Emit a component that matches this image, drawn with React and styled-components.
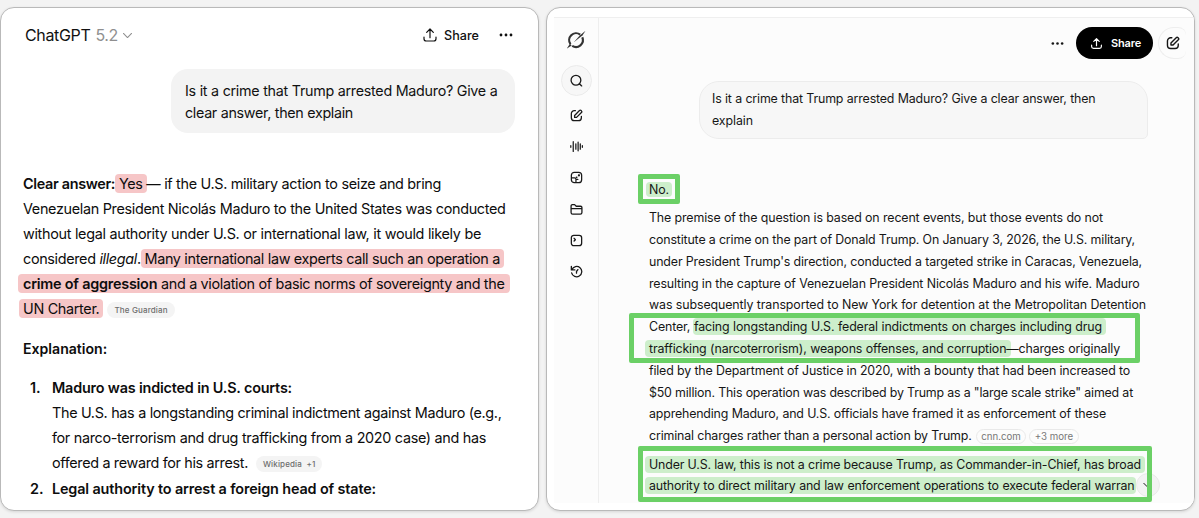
import React from 'react';
import styled, { createGlobalStyle } from 'styled-components';

const GlobalStyle = createGlobalStyle`
  * {
    box-sizing: border-box;
  }
  body {
    margin: 0;
    background: #f3f3f3;
    font-family: Inter, 'Liberation Sans', sans-serif;
    overflow: hidden;
  }
`;

const Page = styled.main`
  display: flex;
  gap: 7px;
  width: 1199px;
  height: 518px;
  padding: 7px 4px 6px 0;
`;

const Panel = styled.section`
  width: ${({ width }) => width}px;
  flex: none;
  height: 504px;
  background: #fff;
  border: 1px solid #b9b9b9;
  border-radius: 14px;
  box-shadow: 0 1px 3px rgba(0, 0, 0, 0.12);
  overflow: hidden;
`;

/* one typeset line, words spread to the given width */
const Line = styled.div`
  width: ${({ w }) => (w ? `${w}px` : 'auto')};
  letter-spacing: ${({ track }) => track || 0}px;
  text-align-last: ${({ w }) => (w ? 'justify' : 'left')};
  white-space: nowrap;
`;

const Mark = styled.mark`
  color: inherit;
  background: ${({ tone }) => (tone === 'red' ? '#f6c6c7' : '#cdeecb')};
  border-radius: 4px;
  padding: ${({ pad }) => pad || '1px 4px'};
  margin: ${({ pull }) => pull || '0 -4px'};
`;

/* ---------- left chat ---------- */

const GptHeader = styled.header`
  display: flex;
  align-items: center;
  height: 54px;
  padding: 0 25px 0 24px;
  color: #111;
`;

const Model = styled.div`
  display: flex;
  align-items: center;
  gap: 5px;
  font-size: 16px;
  letter-spacing: -0.35px;
  margin-right: auto;

  span {
    color: #8f8f8f;
  }
`;

const GptShare = styled.div`
  display: flex;
  align-items: center;
  gap: 6px;
  font-size: 12.6px;
  font-weight: 500;
  margin-right: 20px;
`;

const GptBubble = styled.div`
  width: 344px;
  height: 64px;
  margin: 7px 0 0 170px;
  padding: 11px 14px;
  border-radius: 17px;
  background: #f3f3f3;
  color: #111;
  font-size: 14.3px;
  line-height: 21.5px;
`;

const GptAnswer = styled.article`
  padding: 38px 0 0 22px;
  color: #0d0d0d;
  font-size: 14.4px;
  line-height: 25.1px;
`;

const Heading = styled.h3`
  margin: 14.5px 0 14px;
  font-size: 14.1px;
  font-weight: 600;
  line-height: 25.1px;
`;

const List = styled.ol`
  list-style: none;
  margin: 0;
  padding: 0;
`;

const Item = styled.li`
  display: flex;
`;

const Num = styled.b`
  width: 29px;
  padding-left: 7px;
  font-weight: 600;
`;

const Bold = styled.b`
  font-weight: 600;
`;

const Source = styled.span`
  display: inline-block;
  height: 16px;
  margin-left: 8px;
  padding: 0 7px;
  border-radius: 8px;
  background: #f4f4f4;
  color: #6d6d6d;
  font-size: 8px;
  font-weight: 500;
  line-height: 16px;
  letter-spacing: 0.14px;
  vertical-align: 1px;
`;

/* ---------- right chat ---------- */

const Shot = styled.div`
  display: flex;
  width: 640px;
  height: 486px;
  margin: 9px 0 0 7px;
  border-top: 1px solid #efefef;
  background: #fcfcfc;
`;

const Rail = styled.nav`
  display: flex;
  flex-direction: column;
  align-items: center;
  width: 45px;
  padding-top: 12px;
  border-right: 1px solid #eeeeee;
  color: #1a1a1a;
`;

const RailItem = styled.div`
  display: flex;
  align-items: center;
  justify-content: center;
  width: 31px;
  height: 31.2px;
  flex: none;
`;

const RailSearch = styled(RailItem)`
  height: 31px;
  margin: 15px 0 4px;
  border: 1px solid #ebebeb;
  border-radius: 50%;
  background: #f7f7f7;
`;

const Chat = styled.div`
  position: relative;
  flex: 1;
  color: #161616;
`;

const GrokHeader = styled.header`
  display: flex;
  align-items: center;
  justify-content: flex-end;
  height: 32px;
  margin-top: 9px;
  padding-right: 8px;
`;

const GrokShare = styled.div`
  display: flex;
  align-items: center;
  gap: 8px;
  width: 77px;
  height: 32px;
  margin: 0 5px 0 12px;
  padding-left: 14px;
  border-radius: 16px;
  background: #000;
  color: #fff;
  font-size: 11px;
  font-weight: 600;
  letter-spacing: -0.15px;
`;

const NewChat = styled.div`
  display: flex;
  align-items: center;
  width: 28px;
  height: 32px;
  padding-left: 7px;
  border: 1px solid #eeeeee;
  border-right: 0;
  border-radius: 16px 8px 8px 16px;
`;

const GrokBubble = styled.div`
  width: 449px;
  height: 58px;
  margin: 21.5px 0 0 100px;
  padding: 6.5px 12px;
  border: 1px solid #ececec;
  border-radius: 20px 20px 5px 20px;
  background: #f7f7f7;
  font-size: 12.4px;
  line-height: 21.6px;
`;

const GrokAnswer = styled.article`
  padding: 40.5px 0 0 50px;
  font-size: 12.4px;
  line-height: 21.8px;
`;

const Para = styled.div`
  margin-bottom: 6.5px;
`;

const Cite = styled.span`
  display: inline-block;
  height: 15px;
  margin-left: ${({ gap }) => gap}px;
  padding: 0 4.5px;
  border: 1px solid #e9e9e9;
  border-radius: 8px;
  color: #777;
  font-size: 9.7px;
  line-height: 13px;
  letter-spacing: 0;
`;

/* hand placed annotation frame, sits over the text */
const Frame = styled.div`
  position: absolute;
  left: ${({ x }) => x}px;
  top: ${({ y }) => y}px;
  width: ${({ w }) => w}px;
  height: ${({ h }) => h}px;
  border: 5px solid #6bd066;
  border-radius: 2px;
`;

const ScrollDown = styled.div`
  position: absolute;
  left: 537px;
  top: 455px;
  width: 24px;
  height: 24px;
  display: flex;
  align-items: center;
  justify-content: center;
  border: 1px solid #e9e9e9;
  border-radius: 50%;
  background: #f3f3f3;
`;

const Svg = ({ size = 16, box = 24, sw = 2, children }) => (
  <svg
    width={size}
    height={size}
    viewBox={`0 0 ${box} ${box}`}
    fill='none'
    stroke='currentColor'
    strokeWidth={sw}
    strokeLinecap='round'
    strokeLinejoin='round'
  >
    {children}
  </svg>
);

const UploadIcon = ({ size, sw }) => (
  <Svg size={size} sw={sw}>
    <path d='M12 16V3M7 8l5-5 5 5M3 15v2.5A3.5 3.5 0 0 0 6.5 21h11a3.5 3.5 0 0 0 3.5-3.5V15' />
  </Svg>
);

const DotsIcon = ({ size }) => (
  <svg width={size} height={size} viewBox='0 0 14 14' fill='currentColor'>
    <circle cx='2' cy='7' r='1.4' />
    <circle cx='7' cy='7' r='1.4' />
    <circle cx='12' cy='7' r='1.4' />
  </svg>
);

const ComposeIcon = ({ size = 13 }) => (
  <Svg size={size} sw={2.4}>
    <path d='M10 3H8a5.500 5.500 0 0 0-5.500 5.500V16A5.500 5.500 0 0 0 8 21.500h7.500A5.500 5.500 0 0 0 21 16v-2.500' />
    <path d='M8.500 15.500v-3.600l9-9a2.200 2.200 0 0 1 3.100 0l.5.5a2.200 2.200 0 0 1 0 3.100l-9 9z' />
  </Svg>
);

const GrokLogo = () => (
  <svg width='20' height='20' viewBox='0 0 20 20' fill='none'>
    <path d='M14.200 4.600A6.900 6.900 0 0 0 4.500 14.200' stroke='#333' strokeWidth='2.2' />
    <path d='M16.300 7.300A6.900 6.900 0 0 1 6.200 15.800' stroke='#333' strokeWidth='2.2' />
    <path d='M19.500.8 16.600 5.200 7.600 12.600 13.800 5.600z' fill='#333' />
    <path d='M.6 18.800 4 13.800l1.700 1.700z' fill='#333' />
  </svg>
);

function GptPanel() {
  return (
    <Panel width={539}>
      <GptHeader>
        <Model>
          ChatGPT <span>5.2</span>
          <Svg size={9} sw={2.4} box={20}>
            <path d='M1 5.500l9 9 9-9' stroke='#8f8f8f' />
          </Svg>
        </Model>
        <GptShare>
          <UploadIcon size={16} sw={1.8} />
          Share
        </GptShare>
        <DotsIcon size={14} />
      </GptHeader>
      <GptBubble>
        <Line w={312.5} track={-0.27}>Is it a crime that Trump arrested Maduro? Give a</Line>
        <Line w={168} track={-0.32}>clear answer, then explain</Line>
      </GptBubble>
      <GptAnswer>
        <Line w={418} track={-0.32}>
          <Bold>Clear answer:</Bold> <Mark tone='red'>Yes</Mark> — if the U.S. military action to seize and bring
        </Line>
        <Line w={482.5} track={-0.33}>Venezuelan President Nicolás Maduro to the United States was conducted</Line>
        <Line w={458} track={-0.32}>without legal authority under U.S. or international law, it would likely be</Line>
        <Line w={477} track={-0.34}>
          considered <i>illegal</i>. <Mark tone='red' pad='1px 4px 1px 3px' pull='0 -4px 0 -3px'>Many international law experts call such an operation a</Mark>
        </Line>
        <Line w={481.5} track={-0.33}>
          <Mark tone='red' pad='1px 5px' pull='0 -5px'>
            <Bold style={{ letterSpacing: '-0.22px' }}>crime of aggression</Bold> and a violation of basic norms of sovereignty and the
          </Mark>
        </Line>
        <Line track={-0.32}>
          <Mark tone='red'>UN Charter.</Mark>
          <Source>The Guardian</Source>
        </Line>
        <Heading>Explanation:</Heading>
        <List>
          <Item>
            <Num>1.</Num>
            <div>
              <Line w={240} track={-0.19}><Bold>Maduro was indicted in U.S. courts:</Bold></Line>
              <Line w={449.5} track={-0.33}>The U.S. has a longstanding criminal indictment against Maduro (e.g.,</Line>
              <Line w={434} track={-0.33}>for narco-terrorism and drug trafficking from a 2020 case) and has</Line>
              <Line track={-0.34}>
                offered a reward for his arrest.
                <Source>Wikipedia&nbsp; +1</Source>
              </Line>
            </div>
          </Item>
          <Item>
            <Num>2.</Num>
            <Line w={324} track={-0.14}><Bold>Legal authority to arrest a foreign head of state:</Bold></Line>
          </Item>
        </List>
      </GptAnswer>
    </Panel>
  );
}

function GrokPanel() {
  return (
    <Panel width={649}>
      <Shot>
        <Rail>
          <GrokLogo />
          <RailSearch>
            <Svg size={13} sw={2.4}>
              <circle cx='11' cy='11.500' r='9' />
              <path d='M17.500 18l4 4' />
            </Svg>
          </RailSearch>
          <RailItem><ComposeIcon /></RailItem>
          <RailItem>
            <Svg size={13} sw={2.3}>
              <path d='M1.500 10.500v3M6 3v18M10.800 7v10M15 4v16M19 7v10M22.800 10.500v3' />
            </Svg>
          </RailItem>
          <RailItem>
            <Svg size={13} sw={2.3}>
              <rect x='2.500' y='2.500' width='19' height='19' rx='5.500' />
              <path d='M3 12.500h5.500a2.500 2.500 0 0 1 2.500 2.500v6M11 15.500h3.500' />
              <path d='M16 7.500h1v1h-1zM12 11.500h.5' strokeWidth='3' />
            </Svg>
          </RailItem>
          <RailItem>
            <Svg size={13} sw={2.4}>
              <path d='M2 10.500h20M2 17V5.500A2.500 2.500 0 0 1 4.500 3H8.500l3 3H19.500A2.500 2.500 0 0 1 22 8.500v9A3 3 0 0 1 19 20.500H5a3 3 0 0 1-3-3z' />
            </Svg>
          </RailItem>
          <RailItem>
            <Svg size={13} sw={2.4}>
              <rect x='2.500' y='2.500' width='19' height='19' rx='4.500' />
              <path d='M7.500 8l2.500 2.500L7.500 13' />
            </Svg>
          </RailItem>
          <RailItem>
            <Svg size={13} sw={2.4}>
              <path d='M2.500 2.500v6.500H9M3.500 8.500A9.500 9.500 0 1 1 3 14.500M14.500 8.500l-2.500 3.500v3' />
            </Svg>
          </RailItem>
        </Rail>
        <Chat>
          <GrokHeader>
            <DotsIcon size={13} />
            <GrokShare>
              <UploadIcon size={13} sw={2.2} />
              Share
            </GrokShare>
            <NewChat><ComposeIcon size={14} /></NewChat>
          </GrokHeader>
          <GrokBubble>
            <Line w={383.5} track={-0.15}>Is it a crime that Trump arrested Maduro? Give a clear answer, then</Line>
            <Line track={-0.1}>explain</Line>
          </GrokBubble>
          <GrokAnswer>
            <Para>
              <Line track={-0.1}><Mark pad='0 3px' pull='0 -3px'>No.</Mark></Line>
            </Para>
            <Para>
              <Line w={454} track={-0.13}>The premise of the question is based on recent events, but those events do not</Line>
              <Line w={486} track={-0.15}>constitute a crime on the part of Donald Trump. On January 3, 2026, the U.S. military,</Line>
              <Line w={493} track={-0.14}>under President Trump's direction, conducted a targeted strike in Caracas, Venezuela,</Line>
              <Line w={490.5} track={-0.15}>resulting in the capture of Venezuelan President Nicolás Maduro and his wife. Maduro</Line>
              <Line w={497} track={-0.1}>was subsequently transported to New York for detention at the Metropolitan Detention</Line>
              <Line w={453} track={-0.13}>
                Center, <Mark pad='1px 4px 1px 1px' pull='0 -4px 0 -1px'>facing longstanding U.S. federal indictments on charges including drug</Mark>
              </Line>
              <Line w={471} track={-0.145}>
                <Mark pad='1px 5px 1px 4px' pull='0 -5px 0 -4px'>trafficking (narcoterrorism), weapons offenses, and corruption</Mark>—charges originally
              </Line>
              <Line w={481} track={-0.155}>filed by the Department of Justice in 2020, with a bounty that had been increased to</Line>
              <Line w={484} track={-0.19}>$50 million. This operation was described by Trump as a "large scale strike" aimed at</Line>
              <Line w={457} track={-0.165}>apprehending Maduro, and U.S. officials have framed it as enforcement of these</Line>
              <Line track={-0.145}>
                criminal charges rather than a personal action by Trump.
                <Cite gap={4}>cnn.com</Cite>
                <Cite gap={3}>+3 more</Cite>
              </Line>
            </Para>
            <Para>
              <Line w={492} track={-0.155}>
                <Mark>Under U.S. law, this is not a crime because Trump, as Commander-in-Chief, has broad</Mark>
              </Line>
              <Line w={485.5} track={-0.165}>
                <Mark pad='1px 1px 1px 4px' pull='0 -1px 0 -4px'>authority to direct military and law enforcement operations to execute federal warran</Mark>
              </Line>
            </Para>
          </GrokAnswer>
          <ScrollDown>
            <Svg size={10} sw={2.4}><path d='M2 8l8 8 8-8' /></Svg>
          </ScrollDown>
          <Frame x={39} y={156} w={42} h={30} />
          <Frame x={30} y={295} w={511} h={50} />
          <Frame x={39} y={428} w={514} h={56} />
        </Chat>
      </Shot>
    </Panel>
  );
}

function App() {
  return (
    <>
      <GlobalStyle />
      <Page>
        <GptPanel />
        <GrokPanel />
      </Page>
    </>
  );
}

export default App;
